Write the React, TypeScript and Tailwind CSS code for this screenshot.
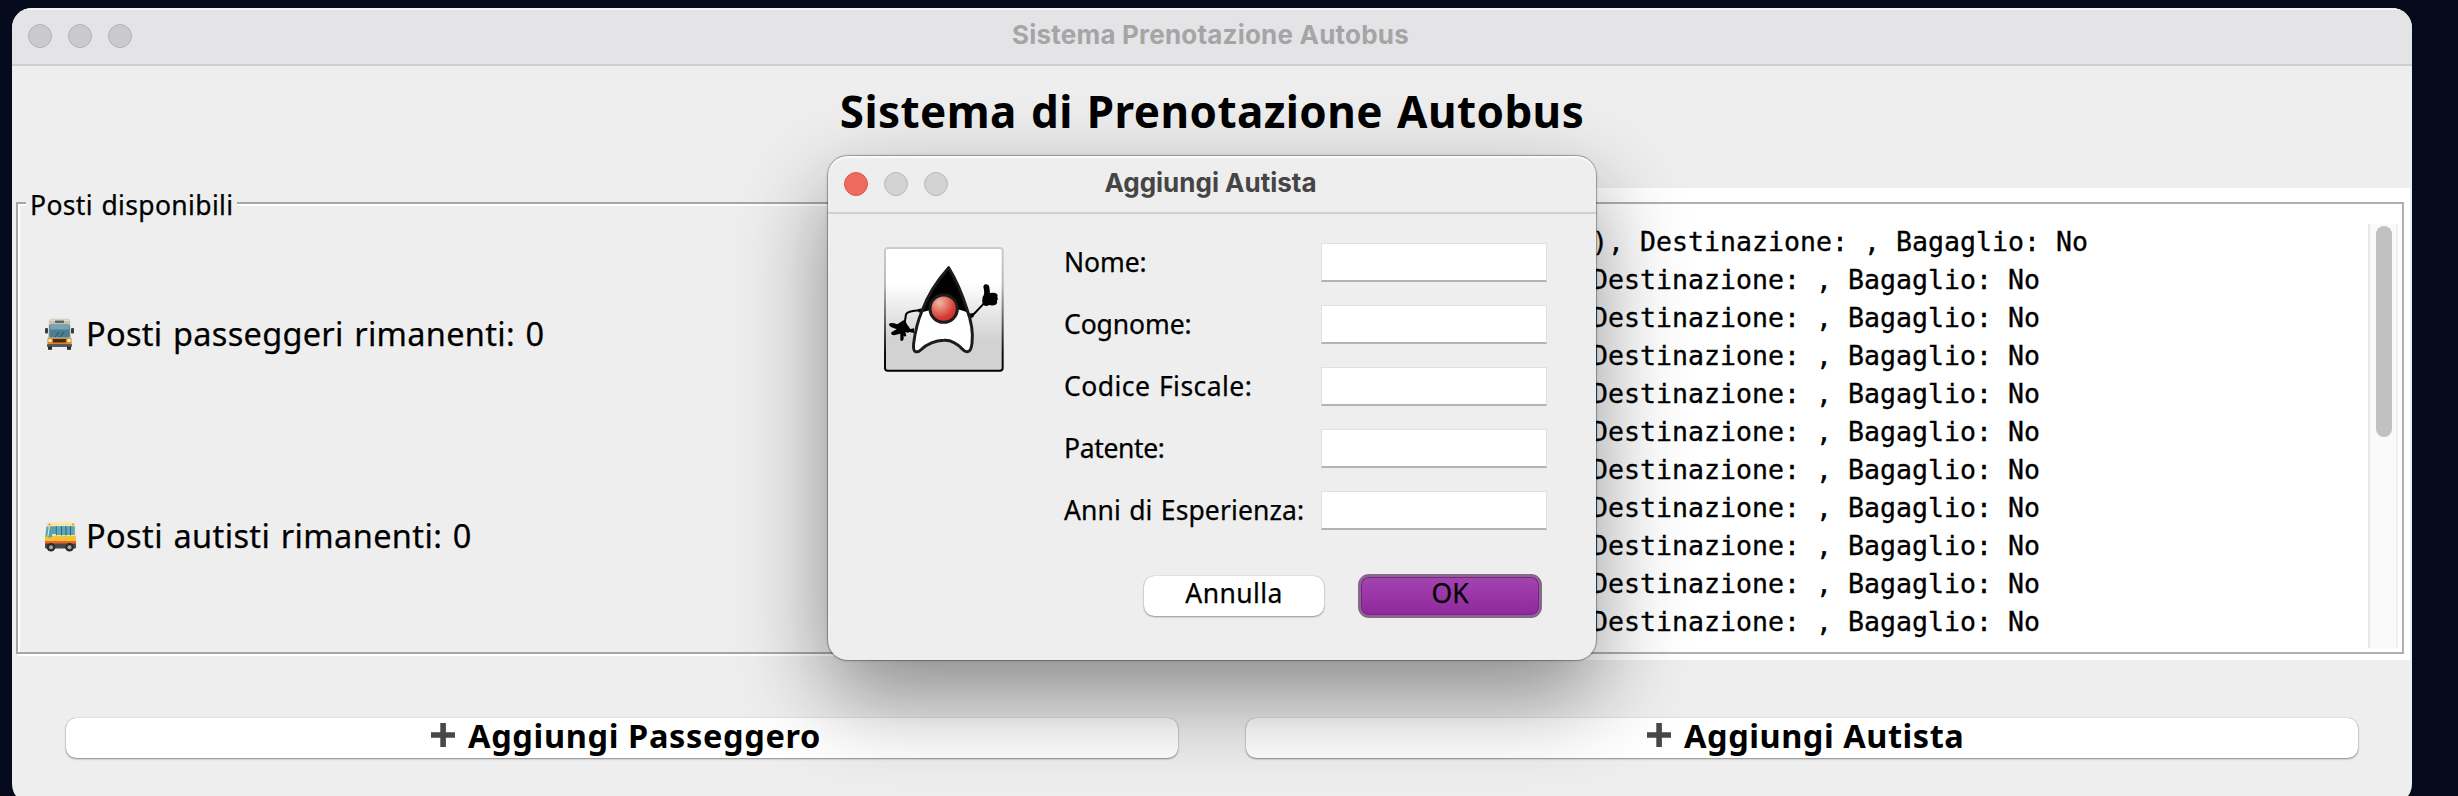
import React from "react";

const SANS = "font-['Noto_Sans','Open_Sans',sans-serif]";

function Light({ className }: { className: string }) {
  return <span className={`h-6 w-6 rounded-full border ${className}`} />;
}

function FrontBusIcon() {
  return (
    <svg viewBox="0 0 33 32" className="h-8 w-[33px]">
      <rect x="1" y="10" width="3" height="5.5" rx="1" fill="#3a3d40" />
      <rect x="27" y="10" width="3" height="5.5" rx="1" fill="#3a3d40" />
      <path d="M5 3Q5 1 8 .8L23 .8Q26 1 26 3L27.500 27H3.500Z" fill="#c9c1b3" />
      <path d="M6 1.500H25V3H6Z" fill="#e4dbc6" />
      <rect x="11" y="2.500" width="9" height="2.500" rx=".6" fill="#5c6670" />
      <rect x="5.200" y="6.500" width="20.600" height="13" rx="1.500" fill="#4c7e93" />
      <rect x="6" y="7" width="19" height="4.500" rx="1" fill="#74a5b5" />
      <path d="M11 19L15 14M16 19L20 14" stroke="#294b5c" strokeWidth="1" />
      <rect x="3.500" y="20" width="24" height="6.500" rx="1" fill="#d98a2b" />
      <rect x="9" y="21" width="13" height="3.500" fill="#4a2c14" />
      <circle cx="6" cy="22.500" r="1.800" fill="#fff0a0" />
      <circle cx="25" cy="22.500" r="1.800" fill="#fff0a0" />
      <rect x="3" y="26" width="25" height="3" rx=".8" fill="#55585c" />
      <rect x="4" y="28.500" width="4" height="3.300" fill="#2b2c2e" />
      <rect x="23" y="28.500" width="4" height="3.300" fill="#2b2c2e" />
    </svg>
  );
}

function SideBusIcon() {
  return (
    <svg viewBox="0 0 33 32" className="h-8 w-[33px]">
      <path d="M8 2.500Q9 .8 11 .8H22Q24 .8 25 2.500Z" fill="#f6ecc6" />
      <path d="M4 2.500H29Q31.500 2.500 31.700 6L32 24H1Q.5 16 1.500 10Q2 3 4 2.500Z" fill="#f4e6ae" />
      <path d="M1 16H32V25H1Z" fill="#f8c22e" />
      <path d="M1 21H32V25H1Z" fill="#e8642a" />
      <path d="M2.500 6.500H4.800L3.300 16.500H1.300Z" fill="#5aa3b8" />
      <path d="M6 6.200H12V14L8.500 14L7.500 17.500H4.200Z" fill="#56a0b8" />
      <rect x="12.800" y="6.200" width="18" height="8.800" fill="#5aa7bb" />
      <path d="M12.400 6V15.500M17.500 6V15.500M22 6V15.500M26.500 6V15.500" stroke="#2e5f73" strokeWidth=".9" />
      <circle cx="5.500" cy="4.500" r="1" fill="#e58b25" />
      <circle cx="29" cy="4.500" r="1" fill="#e58b25" />
      <rect x="1" y="23.500" width="31" height="5" rx="1" fill="#45474b" />
      <circle cx="7" cy="27.300" r="4.300" fill="#2b2d30" />
      <circle cx="7" cy="27.300" r="2" fill="#a4a8ad" />
      <circle cx="25.500" cy="27.300" r="4.300" fill="#2b2d30" />
      <circle cx="25.500" cy="27.300" r="2" fill="#a4a8ad" />
    </svg>
  );
}

function DukeIcon() {
  return (
    <svg viewBox="42 36 360 375" className="h-[125px] w-[120px] shrink-0">
      <defs>
        <linearGradient id="face" x1="0" y1="0" x2="0" y2="1">
          <stop offset="0" stopColor="#ffffff" />
          <stop offset=".28" stopColor="#ffffff" />
          <stop offset=".75" stopColor="#d2d2d2" />
          <stop offset="1" stopColor="#d2d2d2" />
        </linearGradient>
        <linearGradient id="edge" x1="0" y1="0" x2="0" y2="1">
          <stop offset="0" stopColor="#cccccc" />
          <stop offset=".3" stopColor="#b8b8b8" />
          <stop offset=".85" stopColor="#111111" />
          <stop offset="1" stopColor="#000000" />
        </linearGradient>
        <radialGradient id="nose" cx=".35" cy=".28" r=".75">
          <stop offset="0" stopColor="#f3b8a4" />
          <stop offset=".75" stopColor="#d63a30" />
          <stop offset="1" stopColor="#c92f28" />
        </radialGradient>
      </defs>
      <rect x="45" y="39" width="353" height="368" rx="8" fill="url(#face)" stroke="url(#edge)" strokeWidth="6" />
      <path d="M150 226Q112 228 108 238L104 264" fill="none" stroke="#000" strokeWidth="6" />
      <path d="M306 243L342 205" stroke="#000" strokeWidth="6" />
      <path d="M145 222l14 -2l-2 14l-12 -2ZM298 236l12 -2l1 12l-10 4Z" fill="#000" />
      <path
        d="M236 98Q268 150 290 220Q312 280 306 325Q303 350 292 350Q284 351 278 343Q250 314 222 316Q182 317 152 345Q144 353 135 349Q129 345 131 325Q138 270 156 228Q180 160 236 98Z"
        fill="#ffffff"
      />
      <path d="M236 98Q180 160 156 232Q200 218 240 220Q275 223 297 236Q268 150 236 98Z" fill="#000" />
      <path
        d="M236 98Q268 150 290 220Q312 280 306 325Q303 350 292 350Q284 351 278 343Q250 314 222 316Q182 317 152 345Q144 353 135 349Q129 345 131 325Q138 270 156 228Q180 160 236 98Z"
        fill="none"
        stroke="#1c1c1c"
        strokeWidth="9"
        strokeLinejoin="round"
      />
      <circle cx="221" cy="221" r="41" fill="url(#nose)" stroke="#1c1c1c" strokeWidth="9" />
      <path
        d="M340 155Q341 147 349 148Q357 149 358 156L360 174Q374 171 380 176Q385 180 382 186Q386 192 381 197Q384 204 377 209Q368 213 358 210Q345 217 338 208Q335 200 338 186Q346 178 340 155Z"
        fill="#000"
      />
      <path
        d="M100 256Q108 258 111 268L121 282L132 280V294L118 291Q114 296 106 291L109 302Q103 308 101 301L101 312Q97 322 91 316L91 296L72 301Q61 300 64 292L80 283L63 276Q54 271 59 265Q66 262 82 268Z"
        fill="#000"
      />
    </svg>
  );
}

function PlusIcon() {
  return (
    <svg viewBox="0 0 24 24" className="h-6 w-6 shrink-0">
      <path d="M9.300 0h5.600v9.300H24v5.400h-9.100V24H9.300v-9.300H0V9.300h9.300Z" fill="#484848" />
    </svg>
  );
}

const fields = [
  { label: "Nome:", tracking: "tracking-[-0.1px]" },
  { label: "Cognome:", tracking: "tracking-[-0.1px]" },
  { label: "Codice Fiscale:", tracking: "tracking-[0.45px]" },
  { label: "Patente:", tracking: "tracking-[-0.35px]" },
  { label: "Anni di Esperienza:", tracking: "tracking-[0.1px]" },
];

const rows = ["), Destinazione: , Bagaglio: No", ...Array<string>(10).fill("Destinazione: , Bagaglio: No")];

function Dialog() {
  return (
    <section className="absolute left-[828px] top-[156px] flex h-[504px] w-[768px] flex-col rounded-[20px] bg-[#eeeeee] shadow-[0_0_0_1px_rgba(0,0,0,0.22),0_0_3px_rgba(0,0,0,0.3),0_36px_90px_rgba(0,0,0,0.43)]">
      <header className="grid h-[58px] grid-cols-[1fr_auto_1fr] rounded-t-[20px] border-b-2 border-[#d0d0d0] shadow-[inset_0_2px_0_rgba(255,255,255,0.7)]">
        <div className="flex items-center gap-4 pl-4">
          <Light className="border-[#dc5a50] bg-[#ec6a5e]" />
          <Light className="border-[#b9b9b9] bg-[#d3d3d3]" />
          <Light className="border-[#b9b9b9] bg-[#d3d3d3]" />
        </div>
        <h2 className="pr-[3px] font-['Inter',sans-serif] text-[26px] font-bold leading-[54px] text-[#454545]">Aggiungi Autista</h2>
      </header>
      <div className="flex gap-[60px] pl-14 pt-[29px]">
        <div className="pt-1">
          <DukeIcon />
        </div>
        <div className="flex flex-col gap-6">
          {fields.map((f) => (
            <div key={f.label} className="flex h-[38px]">
              <label className={`w-[257px] whitespace-nowrap text-[26.5px] leading-[39px] [-webkit-text-stroke:0.25px_black] [word-spacing:1.3px] ${f.tracking}`}>{f.label}</label>
              <input className="h-[39px] w-[226px] border border-b-2 border-[#e0e0e0] border-b-[#b4b4b4] bg-white outline-none" />
            </div>
          ))}
        </div>
      </div>
      <div className="mt-[45px] flex justify-end gap-[34px] pr-[54px] [-webkit-text-stroke:0.25px_black]">
        <button className="mt-[2px] flex h-10 w-[180px] justify-center rounded-[10px] bg-white text-[26.5px] leading-[35px] tracking-[0.4px] shadow-[0_0_1px_rgba(0,0,0,0.35),0_1px_2px_rgba(0,0,0,0.35)]">Annulla</button>
        <button className="flex h-11 w-[184px] justify-center rounded-[11px] border-[3px] border-[#85688a] bg-linear-to-b from-[#a244b0] to-[#90279c] text-[26.5px] leading-[33px] shadow-[inset_0_0_0_1px_#7c2088]">OK</button>
      </div>
    </section>
  );
}

export default function App() {
  return (
    <main className={`relative h-[796px] w-full overflow-hidden bg-[#060a1d] pl-3 pt-2 text-black ${SANS}`}>
      <div className="flex h-[796px] w-[2400px] flex-col overflow-hidden rounded-[20px] bg-[#eeeeee]">
        <header className="grid h-[58px] shrink-0 grid-cols-[1fr_auto_1fr] border-b-2 border-[#cfcfd0] bg-[#e4e4e6] shadow-[inset_0_2px_0_#f3f3f4]">
          <div className="flex items-center gap-4 pl-4">
            <Light className="border-[#b3b3b5] bg-[#cacacc]" />
            <Light className="border-[#b3b3b5] bg-[#cacacc]" />
            <Light className="border-[#b3b3b5] bg-[#cacacc]" />
          </div>
          <div className="pr-[3px] font-['Inter',sans-serif] text-[26px] font-bold leading-[54px] tracking-[0.2px] text-[#a5a5a6]">Sistema Prenotazione Autobus</div>
        </header>

        <h1 className="h-[122px] shrink-0 pt-[15px] text-center text-[44px] font-bold leading-[60px] tracking-[0.42px] [word-spacing:2.2px]">
          Sistema di Prenotazione Autobus
        </h1>

        <div className="flex h-[472px] shrink-0">
          <div className="flex w-[1200px] pb-[6px] pl-1 pr-[6px] pt-[14px]">
            <div className="relative flex flex-1 flex-col gap-[162px] border-2 border-[#a6a6a6] pl-[26px] pt-[110px] shadow-[2px_2px_0_#ffffff,inset_2px_2px_0_#ffffff] [-webkit-text-stroke:0.25px_black]">
              <span className="absolute -top-[14px] left-2 bg-[#eeeeee] pl-[4px] pr-1 text-[26.5px] leading-[30px] tracking-[0.35px] [word-spacing:1.3px]">Posti disponibili</span>
              <div className="flex h-10 items-center gap-[9px] text-[32.5px] leading-10 tracking-[0.3px] [word-spacing:1.7px]">
                <FrontBusIcon />
                <span>Posti passeggeri rimanenti: 0</span>
              </div>
              <div className="flex h-10 items-center gap-[9px] text-[32.5px] leading-10 tracking-[0.38px] [word-spacing:1.7px]">
                <SideBusIcon />
                <span>Posti autisti rimanenti: 0</span>
              </div>
            </div>
          </div>
          <div className="flex w-[1198px] bg-white pb-[6px] pl-1 pr-[6px] pt-[14px]">
            <div className="flex flex-1 justify-between border-2 border-[#b0b0b0] pb-1 pl-[374px] pr-1 pt-5">
              <div className="-mt-px whitespace-pre font-['DejaVu_Sans_Mono',monospace] text-[26.5px] leading-[38px] tracking-[0.047px] [-webkit-text-stroke:0.35px_black]">
                {rows.map((r, i) => (
                  <div key={i}>{r}</div>
                ))}
              </div>
              <div className="flex w-[30px] justify-center border-x-2 border-l-[#e8e8e8] border-r-[#f0f0f0] bg-[#fafafa] pt-[2px]">
                <div className="ml-px h-[211px] w-4 rounded-full bg-[#c1c1c1]" />
              </div>
            </div>
          </div>
        </div>

        <div className="flex gap-[68px] pl-[54px] pt-[58px] text-[32.5px] font-bold leading-[34px] [word-spacing:1.7px]">
          <button className="flex h-10 w-[1112px] gap-[13px] rounded-[10px] bg-white pl-[365px] shadow-[0_0_1px_rgba(0,0,0,0.4),0_1px_2px_rgba(0,0,0,0.4)]">
            <span className="pt-[5px]">
              <PlusIcon />
            </span>
            <span className="pt-px tracking-[0.65px]">Aggiungi Passeggero</span>
          </button>
          <button className="flex h-10 w-[1112px] gap-[13px] rounded-[10px] bg-white pl-[401px] shadow-[0_0_1px_rgba(0,0,0,0.4),0_1px_2px_rgba(0,0,0,0.4)]">
            <span className="pt-[5px]">
              <PlusIcon />
            </span>
            <span className="pt-px tracking-[0.55px]">Aggiungi Autista</span>
          </button>
        </div>
      </div>
      <Dialog />
    </main>
  );
}
